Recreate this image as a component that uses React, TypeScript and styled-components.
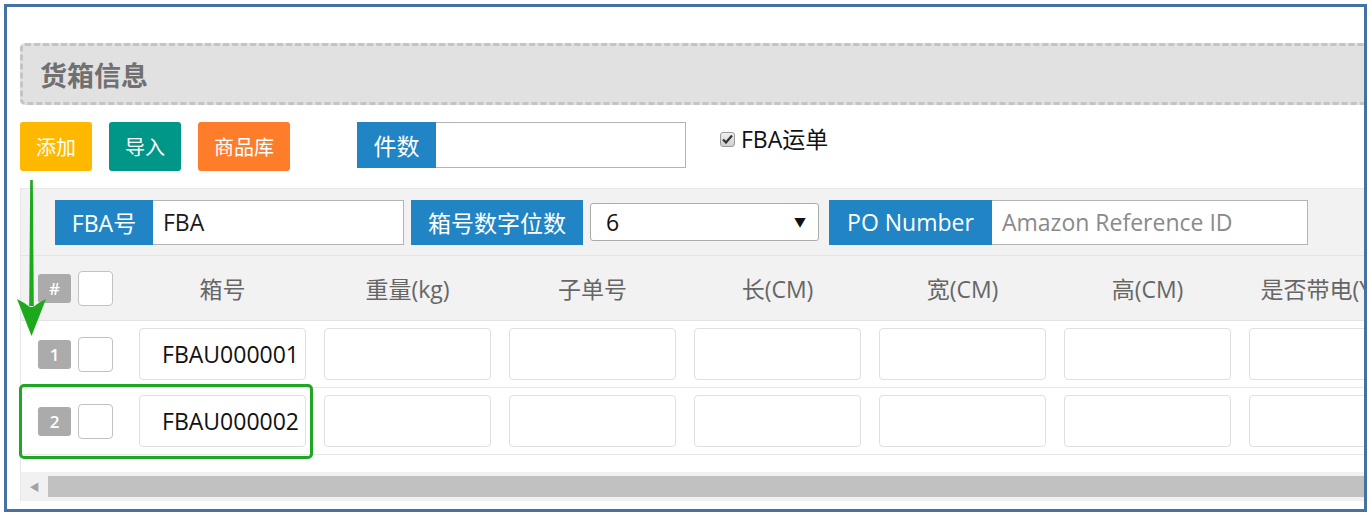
import styled, { createGlobalStyle } from "styled-components";

const font = `"Open Sans", "Noto Sans CJK SC", sans-serif`;
const blue = "#2185c5";
const line = "#e4e4e4";

const GlobalStyle = createGlobalStyle`
  html, body {
    margin: 0;
    padding: 0;
    background: #ffffff;
  }
  body {
    font-family: ${font};
  }
`;

const Frame = styled.div`
  position: relative;
  box-sizing: border-box;
  margin: 4px 0 0 4px;
  width: 1363px;
  height: 508px;
  border: 3px solid #4672a3;
  padding: 36px 0 0 13px;
  overflow: hidden;
  background: #ffffff;
`;

const TitleBar = styled.div`
  box-sizing: border-box;
  width: 1400px;
  height: 62px;
  border: 3px dashed #c4c4c4;
  border-radius: 5px;
  background: #e1e1e1;
  display: flex;
  align-items: center;
  padding-left: 17px;
`;

const Title = styled.h2`
  margin: 0;
  font-size: 27px;
  font-weight: 700;
  color: #707070;
`;

const Toolbar = styled.div`
  display: flex;
  align-items: flex-start;
  margin-top: 17px;
  height: 49px;
`;

const ActionButton = styled.button<{ $bg: string; $w: number }>`
  box-sizing: border-box;
  width: ${(p) => p.$w}px;
  height: 49px;
  margin-right: 17px;
  border: none;
  border-radius: 3px;
  background: ${(p) => p.$bg};
  color: #ffffff;
  font-family: ${font};
  font-size: 20px;
  padding: 0;
`;

const FieldGroup = styled.div<{ $ml?: number }>`
  display: flex;
  margin-left: ${(p) => p.$ml ?? 0}px;
`;

const FieldLabel = styled.div<{ $w: number; $h: number }>`
  box-sizing: border-box;
  width: ${(p) => p.$w}px;
  height: ${(p) => p.$h}px;
  background: ${blue};
  color: #ffffff;
  font-size: 23px;
  display: flex;
  align-items: center;
  justify-content: center;
  white-space: nowrap;
`;

const FieldInput = styled.input<{ $w: number; $h: number }>`
  box-sizing: border-box;
  width: ${(p) => p.$w}px;
  height: ${(p) => p.$h}px;
  border: 1px solid #b4b4b4;
  border-left: none;
  background: #ffffff;
  font-family: ${font};
  font-size: 23px;
  color: #1a1a1a;
  padding: 0 10px;
  outline: none;
  &::placeholder {
    color: #8a8a8a;
  }
`;

const CheckWrap = styled.label`
  display: flex;
  align-items: center;
  margin-left: 34px;
  margin-top: 3px;
  line-height: 28px;
  font-size: 23px;
  color: #111111;
  gap: 6px;
`;

const FakeCheck = styled.span`
  box-sizing: border-box;
  width: 15px;
  height: 15px;
  border: 1px solid #9a9a9a;
  border-radius: 3px;
  background: linear-gradient(#f0f0f0, #cfcfcf);
  display: flex;
  align-items: center;
  justify-content: center;
`;

const Panel = styled.div`
  margin-top: 17px;
  width: 1420px;
  border-top: 1px solid #e8e8e8;
  border-left: 1px solid #e6e6e6;
`;

const FilterRow = styled.div`
  display: flex;
  align-items: center;
  height: 66px;
  padding-left: 34px;
  background: #f2f2f2;
  border-bottom: 1px solid ${line};
  gap: 7px;
`;

const SelectBox = styled.div`
  box-sizing: border-box;
  width: 229px;
  height: 38px;
  margin-right: 3px;
  border: 1px solid #ababab;
  border-radius: 3px;
  background: #ffffff;
  display: flex;
  align-items: center;
  justify-content: space-between;
  padding: 0 12px 0 15px;
  font-size: 23px;
  color: #111111;
`;

const Caret = styled.span`
  font-size: 12px;
  color: #111111;
`;

const Row = styled.div<{ $head?: boolean }>`
  display: flex;
  align-items: center;
  height: ${(p) => (p.$head ? 64 : 66)}px;
  background: ${(p) => (p.$head ? "#f2f2f2" : "#ffffff")};
  border-bottom: 1px solid ${(p) => (p.$head ? line : "#e8e8e8")};
`;

const IndexCell = styled.div`
  box-sizing: border-box;
  flex: 0 0 109px;
  display: flex;
  align-items: center;
  padding-left: 17px;
  gap: 7px;
`;

const Badge = styled.span`
  width: 33px;
  height: 29px;
  border-radius: 3px;
  background: #ababab;
  color: #ffffff;
  font-size: 17px;
  font-weight: 600;
  display: flex;
  align-items: center;
  justify-content: center;
`;

const BoxCheck = styled.span`
  box-sizing: border-box;
  width: 35px;
  height: 35px;
  border: 1px solid #c2c2c2;
  border-radius: 4px;
  background: #ffffff;
`;

const Cell = styled.div`
  box-sizing: border-box;
  flex: 0 0 185px;
  padding: 0 9px;
  display: flex;
  justify-content: center;
  white-space: nowrap;
`;

const HeadText = styled.span`
  font-size: 23px;
  color: #666666;
`;

const CellInput = styled.input`
  box-sizing: border-box;
  width: 167px;
  height: 52px;
  border: 1px solid #e0e0e0;
  border-radius: 4px;
  background: #ffffff;
  font-family: ${font};
  font-size: 23px;
  color: #111111;
  text-align: right;
  padding: 0 6px;
  outline: none;
`;

const Spacer = styled.div`
  height: 17px;
  background: #ffffff;
`;

const ScrollTrack = styled.div`
  display: flex;
  align-items: center;
  height: 29px;
  background: #f1f1f1;
`;

const ScrollArrow = styled.span`
  width: 27px;
  display: flex;
  justify-content: center;
  color: #a3a3a3;
  font-size: 10px;
`;

const ScrollThumb = styled.div`
  flex: 1;
  height: 21px;
  background: #c1c1c1;
`;

const Highlight = styled.div`
  position: absolute;
  left: 12px;
  top: 377px;
  box-sizing: border-box;
  width: 294px;
  height: 75px;
  border: 3px solid #20a624;
  border-radius: 5px;
  pointer-events: none;
`;

const Arrow = styled.svg`
  position: absolute;
  left: 10px;
  top: 173px;
`;

const columns = ["箱号", "重量(kg)", "子单号", "长(CM)", "宽(CM)", "高(CM)", "是否带电(Y/N)"];
const rows = ["FBAU000001", "FBAU000002"];

const App = (): JSX.Element => {
  return (
    <>
      <GlobalStyle />
      <Frame>
        <TitleBar>
          <Title>货箱信息</Title>
        </TitleBar>

        <Toolbar>
          <ActionButton $bg="#ffb800" $w={72}>添加</ActionButton>
          <ActionButton $bg="#009688" $w={72}>导入</ActionButton>
          <ActionButton $bg="#fe7d2a" $w={92}>商品库</ActionButton>
          <FieldGroup $ml={50}>
            <FieldLabel $w={79} $h={46}>件数</FieldLabel>
            <FieldInput $w={250} $h={46} readOnly />
          </FieldGroup>
          <CheckWrap>
            <FakeCheck>
              <svg width="11" height="10" viewBox="0 0 11 10">
                <path d="M1 5.5 L4 8.5 L10 1.5" fill="none" stroke="#333" strokeWidth="2.2" />
              </svg>
            </FakeCheck>
            FBA运单
          </CheckWrap>
        </Toolbar>

        <Panel>
          <FilterRow>
            <FieldGroup>
              <FieldLabel $w={98} $h={45}>FBA号</FieldLabel>
              <FieldInput $w={251} $h={45} defaultValue="FBA" readOnly />
            </FieldGroup>
            <FieldLabel $w={172} $h={45}>箱号数字位数</FieldLabel>
            <SelectBox>
              6<Caret>▼</Caret>
            </SelectBox>
            <FieldGroup>
              <FieldLabel $w={163} $h={45}>PO Number</FieldLabel>
              <FieldInput $w={316} $h={45} placeholder="Amazon Reference ID" readOnly />
            </FieldGroup>
          </FilterRow>

          <Row $head>
            <IndexCell>
              <Badge>#</Badge>
              <BoxCheck />
            </IndexCell>
            {columns.map((c) => (
              <Cell key={c}>
                <HeadText>{c}</HeadText>
              </Cell>
            ))}
          </Row>

          {rows.map((r, i) => (
            <Row key={r}>
              <IndexCell>
                <Badge>{i + 1}</Badge>
                <BoxCheck />
              </IndexCell>
              {columns.map((c, j) => (
                <Cell key={c}>
                  <CellInput defaultValue={j === 0 ? r : ""} readOnly />
                </Cell>
              ))}
            </Row>
          ))}

          <Spacer />
          <ScrollTrack>
            <ScrollArrow>◀</ScrollArrow>
            <ScrollThumb />
          </ScrollTrack>
        </Panel>

        <Highlight />
        <Arrow width="30" height="157" viewBox="0 0 30 157">
          <path d="M13.2 0 L15.8 0 L16.8 126 L12.2 126 Z" fill="#1caa1c" />
          <path d="M0 119 Q8 123 13 127 L16 127 Q21 123 29 119 L14.5 156 Z" fill="#1caa1c" />
        </Arrow>
      </Frame>
    </>
  );
};

export default App;
